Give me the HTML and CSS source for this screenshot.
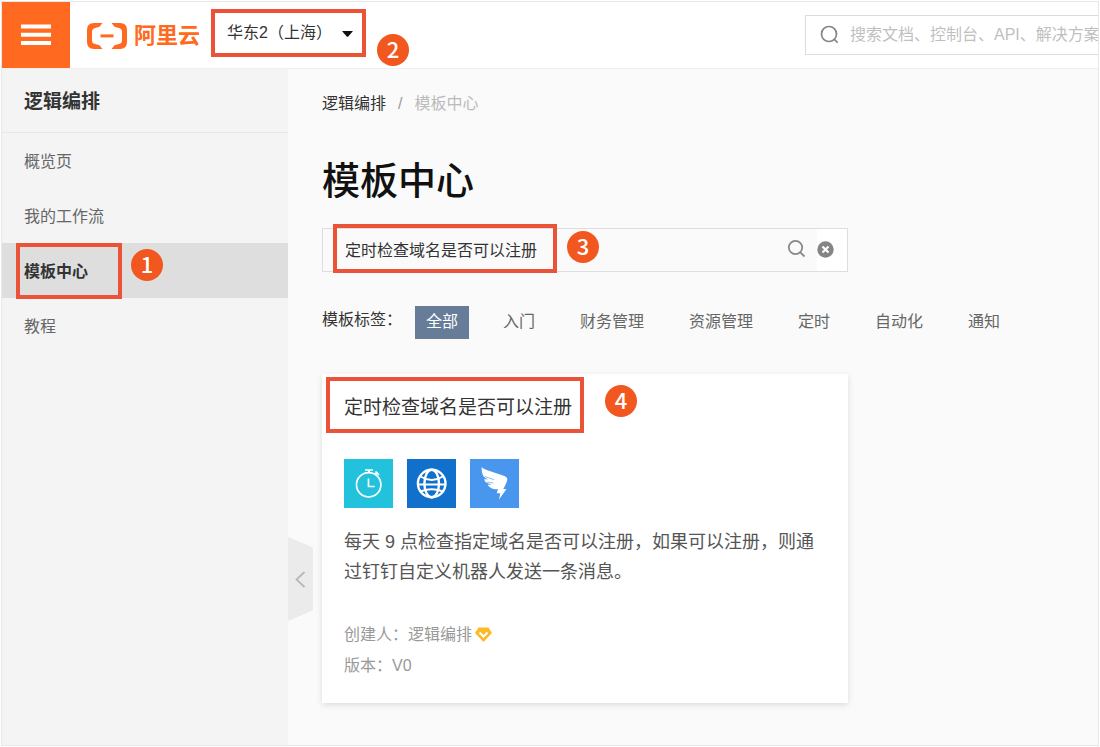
FILE: index.html
```html
<!DOCTYPE html>
<html lang="zh-CN">
<head>
<meta charset="utf-8">
<meta name="viewport" content="width=device-width, initial-scale=1">
<title>模板中心</title>
<link rel="stylesheet" href="styles.css">
</head>
<body>
<div class="frame">
  <header class="topbar">
    <button class="menu-button" type="button" aria-label="菜单">
      <svg width="30" height="22" viewBox="0 0 30 22" fill="#fff" aria-hidden="true"><path d="M0 .5h30v4H0zM0 8.7h30v4H0zM0 17h30v4H0z"/></svg>
    </button>
    <a class="logo" href="#">
      <svg width="40" height="26" viewBox="0 0 40 26" fill="#ff6a20" aria-hidden="true">
        <path d="M15.500 0H7Q0 0 0 7v12q0 7 7 7h8.500l-3-3.700-5.200-1.500Q5 20 5 17.500v-9Q5 6 7.300 5.200l5.200-1.500z"/>
        <path d="M24.500 0H33q7 0 7 7v12q0 7-7 7h-8.500l3-3.700 5.200-1.500Q35 20 35 17.500v-9Q35 6 32.700 5.200l-5.200-1.500z"/>
        <path d="M13.500 11.400h13v3h-13z"/>
      </svg>
      <span>阿里云</span>
    </a>
    <div class="region">
      <select class="region-select" aria-label="地域">
        <option>华东2（上海）</option>
      </select>
      <svg class="region-arrow" width="11" height="6" viewBox="0 0 11 6" aria-hidden="true"><path d="M0 0h11L6.300 5.400q-.8.800-1.600 0z" fill="#111"/></svg>
      <span class="mark-box mark-box-region"></span>
      <span class="badge badge-region">2</span>
    </div>
    <div class="global-search">
      <svg width="20" height="20" viewBox="0 0 20 20" fill="none" stroke="#858585" stroke-width="1.700" aria-hidden="true"><circle cx="9" cy="9" r="7.500"/><path d="M14 14l3.600 3.600"/></svg>
      <input type="text" aria-label="搜索" placeholder="搜索文档、控制台、API、解决方案和资源">
    </div>
  </header>
  <div class="body">
    <nav class="sidebar">
      <h2 class="sidebar-title">逻辑编排</h2>
      <ul class="nav-list">
        <li><a class="nav-item" href="#">概览页</a></li>
        <li><a class="nav-item" href="#">我的工作流</a></li>
        <li><a class="nav-item nav-item-active" href="#">模板中心<span class="mark-box mark-box-nav"></span><span class="badge badge-nav">1</span></a></li>
        <li><a class="nav-item" href="#">教程</a></li>
      </ul>
    </nav>
    <main class="main">
      <button class="collapse" type="button" aria-label="收起">
        <svg width="25" height="84" viewBox="0 0 25 84" aria-hidden="true"><path d="M0 0l25 10.500v63L0 84z" fill="#ebebeb"/><path d="M16.500 35l-8 7.500 8 7.500" fill="none" stroke="#b8b8b8" stroke-width="1.800"/></svg>
      </button>
      <div class="breadcrumb">
        <a href="#">逻辑编排</a><span class="slash">/</span><span class="current">模板中心</span>
      </div>
      <h1 class="title">模板中心</h1>
      <div class="search">
        <input type="text" aria-label="搜索模板" value="定时检查域名是否可以注册">
        <button class="search-button" type="button" aria-label="搜索">
          <svg width="20" height="20" viewBox="0 0 20 20" fill="none" stroke="#888" stroke-width="1.800" aria-hidden="true"><circle cx="8.500" cy="8.500" r="6.700"/><path d="M13.300 13.300l4.200 4.200"/></svg>
        </button>
        <button class="clear-button" type="button" aria-label="清除">
          <svg width="17" height="17" viewBox="0 0 17 17" aria-hidden="true"><circle cx="8.500" cy="8.500" r="8.200" fill="#858585"/><path d="M5.500 5.500l6 6M11.500 5.500l-6 6" stroke="#fff" stroke-width="2.200"/></svg>
        </button>
        <span class="mark-box mark-box-search"></span>
        <span class="badge badge-search">3</span>
      </div>
      <div class="tags">
        <span class="tags-label">模板标签：</span>
        <div class="tag-list">
          <button class="tag tag-active" type="button">全部</button>
          <button class="tag" type="button">入门</button>
          <button class="tag" type="button">财务管理</button>
          <button class="tag" type="button">资源管理</button>
          <button class="tag" type="button">定时</button>
          <button class="tag" type="button">自动化</button>
          <button class="tag" type="button">通知</button>
        </div>
      </div>
      <article class="card">
        <h3 class="card-title">定时检查域名是否可以注册</h3>
        <span class="mark-box mark-box-card"></span>
        <span class="badge badge-card">4</span>
        <div class="card-icons">
          <svg width="49" height="49" viewBox="0 0 49 49" fill="none" stroke="#fff" aria-hidden="true"><path d="M0 0h49v49H0z" fill="#22c1dc" stroke="none"/><circle cx="24.700" cy="25.800" r="12.200" stroke-width="1.700"/><path d="M25 11v3M31.300 15.300l2-2" stroke-width="2"/><path d="M21 11h8M31.500 12.500l3.500 3.500M24.500 19.500v8h6.200" stroke-width="1.700"/></svg>
          <svg width="49" height="49" viewBox="0 0 49 49" fill="none" stroke="#fff" stroke-width="2.400" aria-hidden="true"><path d="M0 0h49v49H0z" fill="#1070cb" stroke="none"/><circle cx="24.700" cy="24.500" r="13.800"/><ellipse cx="24.700" cy="24.500" rx="7.300" ry="13.800"/><path d="M13.500 17.500q11.200 7 22.400 0M11 25.500h27.400M13.500 32.500q11.200-4.500 22.400 0" stroke-width="2"/></svg>
          <svg width="49" height="49" viewBox="0 0 49 49" aria-hidden="true"><path d="M0 0h49v49H0z" fill="#4896ed"/><path d="M11.500 8q2.500 2.500 8.800 4.300L33 16.500q4.500 1.500 4.300 4-.3 3-4 9.500H36.500L29 40.500l1.300-6.200h-3.600L28 30q-5 .8-7.800-1.500L17.500 26l4.500-.7q-4.500-.6-6.500-2.400L14 20.300l4-.1q-3.500-1.200-5-3.700Q11.500 13 11.500 8z" fill="#fff"/><path d="M15 17.500l9 3.200M17 23l6.500 1" stroke="#4896ed" stroke-width=".6"/></svg>
        </div>
        <p class="card-text">每天 9 点检查指定域名是否可以注册，如果可以注册，则通过钉钉自定义机器人发送一条消息。</p>
        <div class="card-meta">
          <div class="meta-row">创建人：逻辑编排
            <svg width="17" height="15" viewBox="0 0 17 15" aria-hidden="true"><path d="M3.500.5h10L17 6l-8.500 9L0 6z" fill="#fdb927"/><path d="M4.500 5.500l4 4 4-4" fill="none" stroke="#fff" stroke-width="2"/></svg>
          </div>
          <div class="meta-row">版本：V0</div>
        </div>
      </article>
    </main>
  </div>
</div>
</body>
</html>
```
FILE: styles.css
```css
* {
  box-sizing: border-box;
}

body {
  margin: 0;
  padding: 1px;
  background: #fff;
  color: #333;
  font: 16px/24px "Liberation Sans", "Noto Sans CJK SC", sans-serif;
}

button,
input,
select {
  font: inherit;
  color: inherit;
}

button {
  padding: 0;
  border: 0;
  background: none;
  cursor: pointer;
}

a {
  color: inherit;
  text-decoration: none;
}

svg {
  display: block;
  flex: none;
}

.frame {
  display: flex;
  flex-direction: column;
  min-height: calc(100vh - 2px);
  border: 1px solid #e8e8e8;
  overflow: hidden;
}

.topbar {
  display: flex;
  align-items: center;
  height: 67px;
  border-bottom: 1px solid #efefef;
  background: #fff;
}

.menu-button {
  display: flex;
  align-items: center;
  justify-content: center;
  flex: none;
  width: 68px;
  height: 66px;
  background: #ff6a20;
}

.logo {
  display: flex;
  align-items: center;
  gap: 7px;
  margin: 2px 0 0 17px;
  color: #ff6a20;
  font-size: 22px;
  font-weight: 700;
  white-space: nowrap;
}

.region {
  position: relative;
  display: flex;
  align-items: center;
  width: 155px;
  height: 48px;
  margin: 0 0 5px 11px;
}

.region-select {
  width: 100%;
  height: 40px;
  padding: 0 16px;
  border: 0;
  background: #fff;
  appearance: none;
}

.region-arrow {
  position: absolute;
  right: 13px;
  top: 22px;
}

.global-search {
  display: flex;
  align-items: center;
  gap: 10px;
  width: 293px;
  height: 40px;
  margin: 0 0 1px auto;
  padding-left: 14px;
  border: 1px solid #dcdcdc;
  border-right: 0;
}

.global-search input {
  flex: 1;
  min-width: 0;
  padding: 0;
  border: 0;
  outline: 0;
  background: none;
}

.global-search input::placeholder {
  color: #bfbfbf;
}

.body {
  display: flex;
  flex: 1;
}

.sidebar {
  flex: none;
  width: 286px;
  background: #f4f4f4;
}

.sidebar-title {
  margin: 0;
  padding: 21px 22px 18px;
  border-bottom: 1px solid #e8e8e8;
  font-size: 19px;
  font-weight: 700;
  line-height: 24px;
}

.nav-list {
  margin: 0;
  padding: 0;
  list-style: none;
}

.nav-item {
  position: relative;
  display: block;
  padding: 2px 22px 0;
  color: #666;
  line-height: 53px;
}

.nav-item-active {
  background: #dedede;
  color: #333;
  font-weight: 700;
}

.main {
  position: relative;
  flex: 1;
  min-width: 0;
  padding: 23px 34px 42px;
  background: #fafafa;
}

.collapse {
  position: absolute;
  left: 0;
  top: 468px;
}

.breadcrumb {
  display: flex;
}

.slash {
  margin: 0 12px;
  color: #999;
}

.current {
  color: #bbb;
}

.title {
  margin: 41px 0 23px;
  color: #111;
  font-size: 38px;
  font-weight: 500;
  line-height: 48px;
}

.search {
  position: relative;
  display: flex;
  align-items: center;
  max-width: 526px;
  height: 44px;
  border: 1px solid #dedede;
}

.search input {
  flex: 1;
  min-width: 0;
  height: 40px;
  padding: 0 22px 2px;
  border: 0;
  outline: 0;
  background: none;
}

.search-button {
  margin: 0 10px 2px 0;
}

.clear-button {
  display: flex;
  align-items: center;
  width: 30px;
  height: 42px;
  padding-bottom: 2px;
  background: #fff;
}

.tags {
  display: flex;
  gap: 13px;
  margin-top: 34px;
}

.tags-label {
  flex: none;
  padding-top: 2px;
}

.tag-list {
  display: flex;
  flex-wrap: wrap;
  gap: 12px 23px;
}

.tag {
  height: 33px;
  padding: 0 11px 2px;
  color: #666;
}

.tag-active {
  background: #667c99;
  color: #fff;
}

.card {
  position: relative;
  max-width: 526px;
  margin-top: 35px;
  padding: 19px 22px 22px;
  background: #fff;
  box-shadow: 0 2px 6px rgba(0, 0, 0, 0.12);
}

.card-title {
  margin: 0;
  font-size: 19px;
  font-weight: 400;
  line-height: 30px;
}

.card-icons {
  display: flex;
  gap: 14px;
  margin-top: 36px;
}

.card-text {
  margin: 19px 0 32px;
  color: #555;
  font-size: 18px;
  line-height: 30px;
}

.card-meta {
  color: #999;
  line-height: 31px;
}

.meta-row {
  display: flex;
  align-items: center;
  gap: 3px;
}

.mark-box {
  position: absolute;
  border: 4px solid #ea5337;
  pointer-events: none;
}

.badge {
  position: absolute;
  width: 32px;
  height: 32px;
  border-radius: 50%;
  background: #f1571f;
  color: #fff;
  font: 500 22px/28px "Noto Sans CJK SC", sans-serif;
  text-align: center;
}

.mark-box-region {
  inset: 0;
}

.badge-region {
  left: 166px;
  top: 25px;
}

.mark-box-nav {
  left: 14px;
  top: 0;
  width: 106px;
  height: 56px;
}

.badge-nav {
  left: 129px;
  top: 6px;
}

.mark-box-search {
  left: 10px;
  top: -5px;
  width: 224px;
  height: 49px;
}

.badge-search {
  left: 244px;
  top: 2px;
}

.mark-box-card {
  left: 4px;
  top: 3px;
  width: 258px;
  height: 56px;
}

.badge-card {
  left: 283px;
  top: 11px;
}
```
